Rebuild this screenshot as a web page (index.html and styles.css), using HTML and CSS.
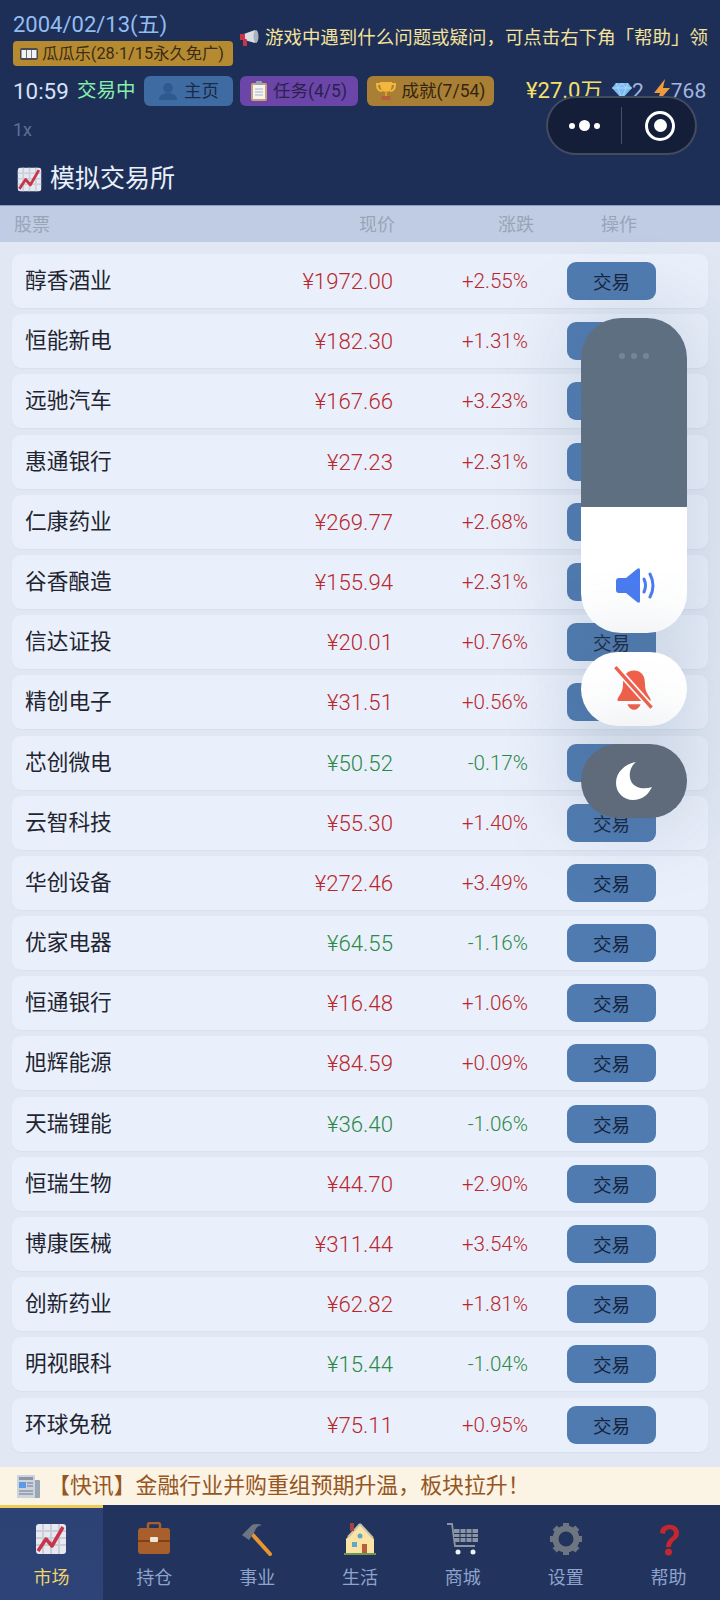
FILE: index.html
```html
<!DOCTYPE html>
<html>
<head>
    <meta charset="utf-8" />
    <title>模拟交易所</title>
    <link rel="stylesheet" href="styles.css">
</head>
<body>
    <svg class="defs" width="0" height="0">
        <symbol id="chart" viewBox="0 0 32 32">
            <rect x="1" y="1" width="30" height="30" rx="3" fill="#e6e9f0" />
            <path d="M1 8h30M1 15h30M1 22h30M8 1v30M16 1v30M24 1v30" stroke="#c9ced8" stroke-width="2" />
            <path d="M3 28L11 16l6 7L28 4" fill="none" stroke="#c8344a" stroke-width="3.5" stroke-linejoin="round" />
        </symbol>
        <symbol id="person" viewBox="0 0 20 20">
            <circle cx="10" cy="7" r="5" fill="#2f5a8f" />
            <path d="M1 19c0-5 4-7 9-7s9 2 9 7z" fill="#2f5a8f" />
        </symbol>
    </svg>

    <div class="page">
        <header class="top">
            <div class="line1">
                <div class="dateBox">
                    <div class="date">2004/02/13(五)</div>
                    <div class="promo">
                        <svg width="18" height="12" viewBox="0 0 18 12"><rect width="18" height="12" rx="2" fill="#4b4b4f" /><rect x="1.5" y="2" width="4.5" height="8" fill="#f2f2f2" /><rect x="6.8" y="2" width="4.5" height="8" fill="#f2f2f2" /><rect x="12" y="2" width="4.5" height="8" fill="#f2f2f2" /></svg>
                        <span>瓜瓜乐(28·1/15永久免广)</span>
                    </div>
                </div>
                <div class="notice">
                    <svg width="20" height="18" viewBox="0 0 20 18"><path d="M1 6l14-5v13L1 10z" fill="#d9dee6" /><rect x="0" y="5" width="5" height="6" fill="#c8344a" /><rect x="3" y="10" width="4" height="7" rx="1" fill="#c8344a" /><ellipse cx="16" cy="7.500" rx="2.500" ry="6.500" fill="#aab2be" /></svg>
                    <span>游戏中遇到什么问题或疑问，可点击右下角「帮助」领</span>
                </div>
            </div>
            <div class="line2">
                <span class="clock">10:59</span>
                <span class="status">交易中</span>
                <span class="chip chipBlue"><svg width="20" height="20"><use href="#person" /></svg>主页</span>
                <span class="chip chipPurple">
                    <svg width="16" height="20" viewBox="0 0 16 20"><rect x="0" y="2" width="16" height="18" rx="2" fill="#c9a27a" /><rect x="2" y="4" width="12" height="14" fill="#f4f4f0" /><path d="M4 8h8M4 11h8M4 14h8" stroke="#a8b4c6" /><rect x="5" y="0" width="6" height="4" rx="1" fill="#9aa3ad" /></svg>
                    任务(4/5)
                </span>
                <span class="chip chipGold">
                    <svg width="20" height="20" viewBox="0 0 20 20"><path d="M5 3H1c0 5 2 7 5 7M15 3h4c0 5-2 7-5 7" fill="none" stroke="#f4b73e" stroke-width="2" /><path d="M4 1h12c0 7-2 10-6 10S4 8 4 1z" fill="#f4b73e" /><rect x="9" y="10" width="2" height="5" fill="#e09a2e" /><rect x="5.500" y="15" width="9" height="4" fill="#b5603a" /></svg>
                    成就(7/54)
                </span>
                <span class="money">¥27.0万</span>
                <svg class="gem" width="20" height="16" viewBox="0 0 20 16"><path d="M4 0h12l4 5-10 11L0 5z" fill="#7dbcf0" /><path d="M0 5h20M6 5l4 11 4-11M4 0l2 5 4-5 4 5 2-5" fill="none" stroke="#b7dcf8" stroke-width=".8" /></svg>
                <span class="gemNum">2</span>
                <svg class="bolt" width="18" height="24" viewBox="0 0 18 24"><path d="M12 0L1 14h6L4 24l13-15h-7z" fill="#ef9b3d" /></svg>
                <span class="gemNum">768</span>
            </div>
            <div class="speed">1x</div>
            <h1 class="title"><svg width="25" height="25"><use href="#chart" /></svg>模拟交易所</h1>
        </header>

        <div class="thead">
            <span>股票</span>
            <span class="thPrice">现价</span>
            <span class="thChange">涨跌</span>
            <span class="thOp">操作</span>
        </div>

        <div class="list">
            <div class="row"><span class="name">醇香酒业</span><span class="price up">¥1972.00</span><span class="chg up">+2.55%</span><button class="btn">交易</button></div>
            <div class="row"><span class="name">恒能新电</span><span class="price up">¥182.30</span><span class="chg up">+1.31%</span><button class="btn">交易</button></div>
            <div class="row"><span class="name">远驰汽车</span><span class="price up">¥167.66</span><span class="chg up">+3.23%</span><button class="btn">交易</button></div>
            <div class="row"><span class="name">惠通银行</span><span class="price up">¥27.23</span><span class="chg up">+2.31%</span><button class="btn">交易</button></div>
            <div class="row"><span class="name">仁康药业</span><span class="price up">¥269.77</span><span class="chg up">+2.68%</span><button class="btn">交易</button></div>
            <div class="row"><span class="name">谷香酿造</span><span class="price up">¥155.94</span><span class="chg up">+2.31%</span><button class="btn">交易</button></div>
            <div class="row"><span class="name">信达证投</span><span class="price up">¥20.01</span><span class="chg up">+0.76%</span><button class="btn">交易</button></div>
            <div class="row"><span class="name">精创电子</span><span class="price up">¥31.51</span><span class="chg up">+0.56%</span><button class="btn">交易</button></div>
            <div class="row"><span class="name">芯创微电</span><span class="price down">¥50.52</span><span class="chg down">-0.17%</span><button class="btn">交易</button></div>
            <div class="row"><span class="name">云智科技</span><span class="price up">¥55.30</span><span class="chg up">+1.40%</span><button class="btn">交易</button></div>
            <div class="row"><span class="name">华创设备</span><span class="price up">¥272.46</span><span class="chg up">+3.49%</span><button class="btn">交易</button></div>
            <div class="row"><span class="name">优家电器</span><span class="price down">¥64.55</span><span class="chg down">-1.16%</span><button class="btn">交易</button></div>
            <div class="row"><span class="name">恒通银行</span><span class="price up">¥16.48</span><span class="chg up">+1.06%</span><button class="btn">交易</button></div>
            <div class="row"><span class="name">旭辉能源</span><span class="price up">¥84.59</span><span class="chg up">+0.09%</span><button class="btn">交易</button></div>
            <div class="row"><span class="name">天瑞锂能</span><span class="price down">¥36.40</span><span class="chg down">-1.06%</span><button class="btn">交易</button></div>
            <div class="row"><span class="name">恒瑞生物</span><span class="price up">¥44.70</span><span class="chg up">+2.90%</span><button class="btn">交易</button></div>
            <div class="row"><span class="name">博康医械</span><span class="price up">¥311.44</span><span class="chg up">+3.54%</span><button class="btn">交易</button></div>
            <div class="row"><span class="name">创新药业</span><span class="price up">¥62.82</span><span class="chg up">+1.81%</span><button class="btn">交易</button></div>
            <div class="row"><span class="name">明视眼科</span><span class="price down">¥15.44</span><span class="chg down">-1.04%</span><button class="btn">交易</button></div>
            <div class="row"><span class="name">环球免税</span><span class="price up">¥75.11</span><span class="chg up">+0.95%</span><button class="btn">交易</button></div>
        </div>

        <div class="ticker">
            <svg width="24" height="24" viewBox="0 0 24 24"><rect x="15" y="6" width="9" height="18" rx="1" fill="#9aa7b5" /><rect x="1" y="1" width="18" height="23" rx="1" fill="#ccd3dc" /><rect x="3" y="3" width="14" height="3" fill="#8a96a5" /><rect x="3" y="8" width="7" height="6" fill="#5b9be6" /><path d="M11 9h6M11 12h6M3 17h14M3 20h14" stroke="#8a96a5" stroke-width="1.500" /></svg>
            <span>【快讯】金融行业并购重组预期升温，板块拉升！</span>
        </div>

        <nav class="tabs">
            <div class="tab on"><svg width="32" height="32"><use href="#chart" /></svg><span>市场</span></div>
            <div class="tab">
                <svg width="34" height="34" viewBox="0 0 34 34"><path d="M11 7V3q0-2 2-2h8q2 0 2 2v4" fill="none" stroke="#a85f2b" stroke-width="2.500" /><rect x="1" y="6" width="32" height="26" rx="3" fill="#a85f2b" /><path d="M1 19h32" stroke="#6e3a16" stroke-width="1.500" /><rect x="13" y="15" width="8" height="5" rx="1" fill="#efe6da" /></svg>
                <span>持仓</span>
            </div>
            <div class="tab">
                <svg width="34" height="34" viewBox="0 0 34 34"><path d="M12 12l18 20" stroke="#e8952f" stroke-width="4" stroke-linecap="round" /><path d="M2 13l10-10q5-2 10 0-6 1-7 6l-6 9z" fill="#6d7680" /></svg>
                <span>事业</span>
            </div>
            <div class="tab">
                <svg width="34" height="34" viewBox="0 0 34 34"><path d="M17 2L3 17v14h28V17z" fill="#fbe3a4" /><path d="M17 2L5 15M17 2l13 14" stroke="#c9c2ae" stroke-width="2" /><rect x="7" y="1" width="4" height="8" fill="#a5433f" /><rect x="19" y="22" width="5" height="9" fill="#b5603a" /><rect x="9" y="20" width="5" height="5" fill="#5fa8cc" /><circle cx="17" cy="14" r="2.500" fill="#5fa8cc" /><rect x="1" y="31" width="32" height="2" fill="#6d9a4a" /></svg>
                <span>生活</span>
            </div>
            <div class="tab">
                <svg width="34" height="34" viewBox="0 0 34 34"><path d="M1 2h5l3 22h20" fill="none" stroke="#8a94a2" stroke-width="1.800" /><rect x="8" y="7" width="24" height="13" fill="#8a94a2" /><path d="M8 11.500h24M8 15.500h24M14 7v13M20 7v13M26 7v13" stroke="#22345e" /><circle cx="12" cy="30" r="2.500" fill="#eef1f5" /><circle cx="27" cy="30" r="2.500" fill="#eef1f5" /></svg>
                <span>商城</span>
            </div>
            <div class="tab">
                <svg width="34" height="34" viewBox="0 0 34 34"><circle cx="17" cy="17" r="10.500" fill="none" stroke="#6d7680" stroke-width="6" /><path d="M17 1v32M1 17h32M5.700 5.700l22.600 22.600M28.300 5.700L5.700 28.300" stroke="#6d7680" stroke-width="6" stroke-dasharray="6 20" /></svg>
                <span>设置</span>
            </div>
            <div class="tab">
                <svg width="34" height="34" viewBox="0 0 34 34"><path d="M8 11c0-11 19-11 19 0 0 7-8 7-8 14h-5c0-9 8-9 8-14 0-5-9-5-9 1z" fill="#c4282e" /><circle cx="16.500" cy="30" r="3.500" fill="#c4282e" /></svg>
                <span>帮助</span>
            </div>
        </nav>

        <div class="capsule">
            <div class="capDots"><i></i><b></b><i></i></div>
            <div class="capLine"></div>
            <div class="capRing"><b></b></div>
        </div>

        <div class="volume">
            <div class="volDark"><i></i><i></i><i></i></div>
            <div class="volLight">
                <svg width="40" height="35" viewBox="0 0 40 35"><path d="M3 10h7L21 1q3-2 3 1v31q0 3-3 1L10 25H3q-3 0-3-3V13q0-3 3-3z" fill="#4a7cf0" /><path d="M28 11q3 6.500 0 13M34 6q6 11.500 0 23" fill="none" stroke="#4a7cf0" stroke-width="3" stroke-linecap="round" /></svg>
            </div>
        </div>
        <div class="pill pillBell">
            <svg width="44" height="46" viewBox="0 0 40 42"><path d="M20 4c7 0 10 5 10 12 0 8 3 10 5 14v2H5v-2c2-4 5-6 5-14 0-7 3-12 10-12z" fill="#f0604a" /><path d="M14 35h12q-2 5-6 5t-6-5z" fill="#f0604a" /><path d="M4 2l33 37" stroke="#fff" stroke-width="6" /><path d="M3 1l33 37" stroke="#f0604a" stroke-width="3" /></svg>
        </div>
        <div class="pill pillMoon">
            <svg width="40" height="40" viewBox="0 0 40 40"><path d="M22 1C11 3 2 11 2 22c0 10 8 17 17 17 9 0 15-5 19-13-9 3-20 1-22-9-1-6 1-12 6-16z" fill="#fff" /></svg>
        </div>
    </div>
</body>
</html>
```

FILE: styles.css
```css
* {
    box-sizing: border-box;
}

body {
    margin: 0;
    font-family: Roboto, "Noto Sans CJK SC", sans-serif;
    line-height: 30px;
}

.defs {
    position: absolute;
}

.page {
    position: relative;
    width: 720px;
    height: 1600px;
    display: flex;
    flex-direction: column;
    overflow: hidden;
    background-color: #e1e8f4;
}

/* top */
.top {
    height: 205px;
    padding: 10px 12px 0 13px;
    background-color: #1e2f57;
    flex-shrink: 0;
}

.line1 {
    display: flex;
    align-items: center;
    gap: 7px;
}

.date {
    font-size: 22px;
    line-height: 30px;
    color: #93bdf0;
}

.promo {
    display: flex;
    align-items: center;
    gap: 4px;
    width: 220px;
    height: 25px;
    margin-top: 1px;
    padding-left: 7px;
    border-radius: 4px;
    font-size: 16.300px;
    white-space: nowrap;
    color: #3a2c16;
    background-color: #b68a30;
}

.notice {
    display: flex;
    align-items: center;
    gap: 5px;
    white-space: nowrap;
    font-size: 18.470px;
    color: #f3e29a;
}

.line2 {
    display: flex;
    align-items: center;
    height: 30px;
    margin-top: 10px;
    white-space: nowrap;
}

.clock {
    width: 64px;
    font-size: 22.400px;
    color: #d5e2f8;
}

.status {
    width: 67px;
    font-size: 19.500px;
    color: #86efac;
}

.chip {
    display: flex;
    align-items: center;
    justify-content: center;
    gap: 6px;
    height: 30px;
    margin-right: 7px;
    border-radius: 6px;
    font-size: 17.500px;
}

.chipBlue {
    width: 89px;
    color: #1b2a45;
    background-color: #3f6ba3;
}

.chipPurple {
    width: 118px;
    margin-right: 9px;
    color: #2c1f52;
    background-color: #6b46a8;
}

.chipGold {
    width: 127px;
    margin-right: 32px;
    color: #33260f;
    background-color: #a97f35;
}

.money {
    width: 86px;
    font-size: 22px;
    color: #f7e06a;
}

.gemNum {
    font-size: 21px;
    color: #a3b7e0;
}

.bolt {
    margin-left: 9px;
}

.speed {
    margin-top: 11px;
    font-size: 18px;
    line-height: 26px;
    color: #5d6f92;
}

.title {
    display: flex;
    align-items: center;
    gap: 8px;
    margin: 18px 0 0 4px;
    font-size: 25px;
    font-weight: 400;
    line-height: 36px;
    color: #eaf0fa;
}

/* table */
.thead {
    position: relative;
    display: flex;
    height: 37px;
    flex-shrink: 0;
    align-items: center;
    padding: 2px 0 0 14px;
    font-size: 18px;
    color: #9aa4b8;
    background-color: #c0cce3;
    border-top: 1px solid #8b9cc0;
}

.thPrice {
    margin-left: 309px;
}

.thChange {
    margin-left: 103px;
}

.thOp {
    margin-left: 67px;
}

.list {
    flex: 1;
    display: flex;
    flex-direction: column;
    gap: 6.200px;
    padding: 12px 12px 0;
}

.row {
    display: grid;
    grid-template-columns: 160px 208px 135px 128px;
    align-items: center;
    height: 54px;
    flex-shrink: 0;
    padding-left: 13px;
    border-radius: 9px;
    background-color: #eaf0fb;
    box-shadow: 0 1px 1px rgba(120, 140, 175, .08);
}

.name {
    font-size: 21.700px;
    color: #1f2530;
}

.price {
    text-align: right;
    font-size: 22.200px;
    font-weight: 300;
}

.chg {
    text-align: right;
    font-size: 20.600px;
    font-weight: 300;
}

.up {
    color: #b8282e;
}

.down {
    color: #2c8a48;
}

.btn {
    justify-self: end;
    width: 89px;
    height: 38px;
    padding: 0;
    border: 0;
    border-radius: 9px;
    font-family: inherit;
    font-size: 18.500px;
    color: #16233c;
    background-color: #4f7bb0;
}

/* bottom */
.ticker {
    display: flex;
    align-items: center;
    gap: 8px;
    height: 38px;
    flex-shrink: 0;
    padding-left: 16px;
    font-size: 21.900px;
    white-space: nowrap;
    color: #96561f;
    background-color: #fbf3e4;
}

.tabs {
    display: flex;
    height: 95px;
    flex-shrink: 0;
    background-color: #22345e;
}

.tab {
    flex: 1;
    display: flex;
    flex-direction: column;
    align-items: center;
    gap: 9px;
    padding-top: 17px;
    font-size: 18px;
    line-height: 26px;
    color: #8ea3cc;
}

.tab svg {
    height: 34px;
}

.tab.on {
    color: #f0d36b;
    border-top: 3px solid #f0cb55;
    padding-top: 14px;
    background: linear-gradient(#2c4274, #2e4478);
}

/* wechat capsule and the floating panels sit on top of the page */
.capsule {
    position: absolute;
    left: 546px;
    top: 96px;
    width: 151px;
    height: 59px;
    display: flex;
    align-items: center;
    border: 2px solid rgba(255, 255, 255, .2);
    border-radius: 30px;
    background-color: #141e38;
}

.capDots {
    display: flex;
    align-items: center;
    justify-content: center;
    gap: 4px;
    width: 73px;
}

.capDots i {
    width: 6px;
    height: 6px;
    border-radius: 50%;
    background-color: #fff;
}

.capDots b {
    width: 11px;
    height: 11px;
    border-radius: 50%;
    background-color: #fff;
}

.capLine {
    width: 1px;
    height: 37px;
    background-color: #46506a;
}

.capRing {
    display: flex;
    align-items: center;
    justify-content: center;
    width: 30px;
    height: 30px;
    margin-left: 23px;
    border: 3px solid #fff;
    border-radius: 50%;
}

.capRing b {
    width: 13px;
    height: 13px;
    border-radius: 50%;
    background-color: #fff;
}

.volume {
    position: absolute;
    left: 581px;
    top: 318px;
    width: 106px;
    height: 315px;
    border-radius: 40px;
    overflow: hidden;
    display: flex;
    flex-direction: column;
}

.pill,
.volume {
    box-shadow: 0 0 70px 20px rgba(90, 110, 140, .16);
}

.volDark {
    display: flex;
    justify-content: center;
    gap: 6px;
    height: 189px;
    padding-top: 35px;
    background-color: #5f6f82;
}

.volDark i {
    width: 6px;
    height: 6px;
    border-radius: 50%;
    background-color: #76869a;
}

.volLight {
    flex: 1;
    display: flex;
    justify-content: center;
    padding: 61px 0 0 4px;
    background-color: #fff;
}

.volLight svg {
    flex-shrink: 0;
}

.pill {
    position: absolute;
    left: 581px;
    width: 106px;
    height: 74px;
    display: flex;
    align-items: center;
    justify-content: center;
    border-radius: 37px;
}

.pillBell {
    top: 652px;
    background-color: #fff;
}

.pillMoon {
    top: 744px;
    background-color: #5f6b7a;
}
```
